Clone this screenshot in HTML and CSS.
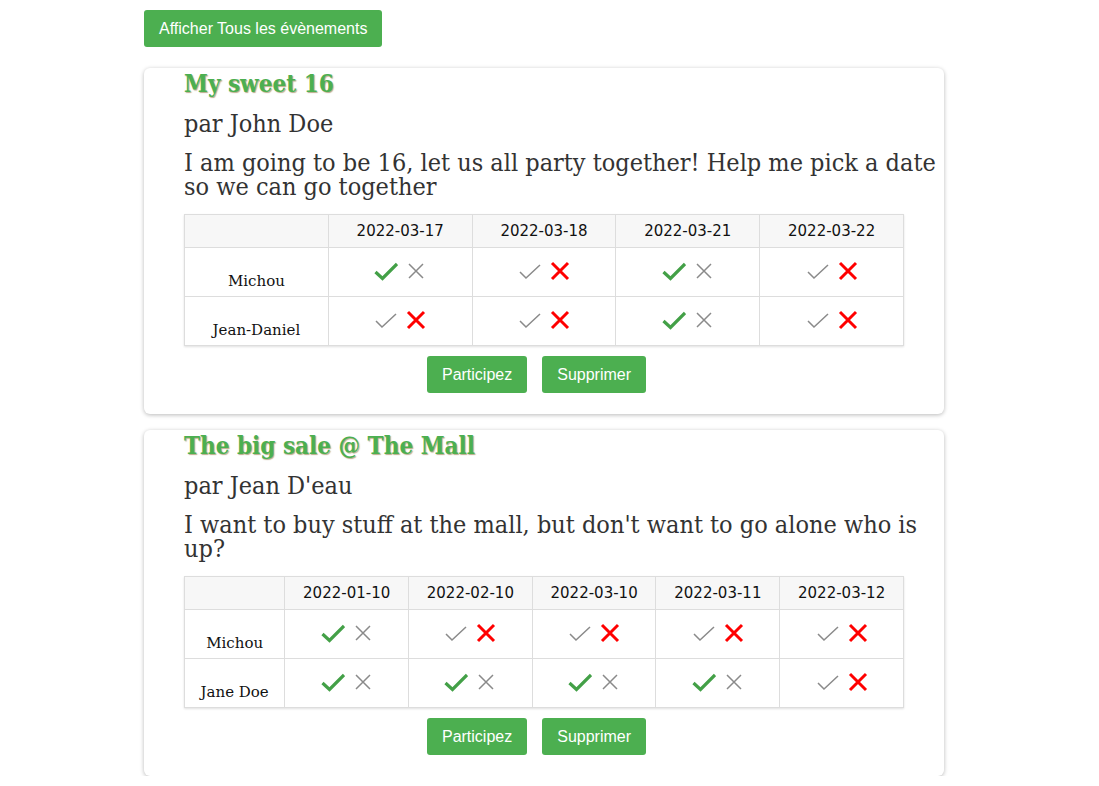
FILE: index.html
```html
<!DOCTYPE html>
<html lang="fr">
<head>
<meta charset="utf-8">
<title>Évènements</title>
<link rel="stylesheet" href="styles.css">
</head>
<body>
<svg width="0" height="0" class="defs">
  <defs>
    <symbol id="ok-on" viewBox="0 0 24 20"><path d="M1.5 11 L8.5 17.5 L23 3" fill="none" stroke="#43a047" stroke-width="3.2"/></symbol>
    <symbol id="ok-off" viewBox="0 0 24 20"><path d="M2 11 L8 17 L22 4" fill="none" stroke="#8a8a8a" stroke-width="1.5"/></symbol>
    <symbol id="no-on" viewBox="0 0 20 20"><path d="M2 2 L18 18 M18 2 L2 18" fill="none" stroke="#ff0000" stroke-width="3"/></symbol>
    <symbol id="no-off" viewBox="0 0 20 20"><path d="M3 3 L17 17 M17 3 L3 17" fill="none" stroke="#8a8a8a" stroke-width="1.5"/></symbol>
  </defs>
</svg>
<div class="page">
  <button class="btn">Afficher Tous les évènements</button>

  <section class="card">
    <h2 class="title">My sweet 16</h2>
    <p class="author">par John Doe</p>
    <p class="desc">I am going to be 16, let us all party together! Help me pick a date so we can go together</p>
    <table class="grid fixed">
      <thead>
        <tr><th></th><th>2022-03-17</th><th>2022-03-18</th><th>2022-03-21</th><th>2022-03-22</th></tr>
      </thead>
      <tbody>
        <tr>
          <td class="name">Michou</td>
          <td><span class="pair"><svg class="ic-ok"><use href="#ok-on"/></svg><svg class="ic-no"><use href="#no-off"/></svg></span></td>
          <td><span class="pair"><svg class="ic-ok"><use href="#ok-off"/></svg><svg class="ic-no"><use href="#no-on"/></svg></span></td>
          <td><span class="pair"><svg class="ic-ok"><use href="#ok-on"/></svg><svg class="ic-no"><use href="#no-off"/></svg></span></td>
          <td><span class="pair"><svg class="ic-ok"><use href="#ok-off"/></svg><svg class="ic-no"><use href="#no-on"/></svg></span></td>
        </tr>
        <tr>
          <td class="name">Jean-Daniel</td>
          <td><span class="pair"><svg class="ic-ok"><use href="#ok-off"/></svg><svg class="ic-no"><use href="#no-on"/></svg></span></td>
          <td><span class="pair"><svg class="ic-ok"><use href="#ok-off"/></svg><svg class="ic-no"><use href="#no-on"/></svg></span></td>
          <td><span class="pair"><svg class="ic-ok"><use href="#ok-on"/></svg><svg class="ic-no"><use href="#no-off"/></svg></span></td>
          <td><span class="pair"><svg class="ic-ok"><use href="#ok-off"/></svg><svg class="ic-no"><use href="#no-on"/></svg></span></td>
        </tr>
      </tbody>
    </table>
    <div class="actions">
      <button class="btn">Participez</button>
      <button class="btn">Supprimer</button>
    </div>
  </section>

  <section class="card">
    <h2 class="title">The big sale @ The Mall</h2>
    <p class="author">par Jean D'eau</p>
    <p class="desc">I want to buy stuff at the mall, but don't want to go alone who is up?</p>
    <table class="grid">
      <thead>
        <tr><th class="first"></th><th>2022-01-10</th><th>2022-02-10</th><th>2022-03-10</th><th>2022-03-11</th><th>2022-03-12</th></tr>
      </thead>
      <tbody>
        <tr>
          <td class="name">Michou</td>
          <td><span class="pair"><svg class="ic-ok"><use href="#ok-on"/></svg><svg class="ic-no"><use href="#no-off"/></svg></span></td>
          <td><span class="pair"><svg class="ic-ok"><use href="#ok-off"/></svg><svg class="ic-no"><use href="#no-on"/></svg></span></td>
          <td><span class="pair"><svg class="ic-ok"><use href="#ok-off"/></svg><svg class="ic-no"><use href="#no-on"/></svg></span></td>
          <td><span class="pair"><svg class="ic-ok"><use href="#ok-off"/></svg><svg class="ic-no"><use href="#no-on"/></svg></span></td>
          <td><span class="pair"><svg class="ic-ok"><use href="#ok-off"/></svg><svg class="ic-no"><use href="#no-on"/></svg></span></td>
        </tr>
        <tr>
          <td class="name">Jane Doe</td>
          <td><span class="pair"><svg class="ic-ok"><use href="#ok-on"/></svg><svg class="ic-no"><use href="#no-off"/></svg></span></td>
          <td><span class="pair"><svg class="ic-ok"><use href="#ok-on"/></svg><svg class="ic-no"><use href="#no-off"/></svg></span></td>
          <td><span class="pair"><svg class="ic-ok"><use href="#ok-on"/></svg><svg class="ic-no"><use href="#no-off"/></svg></span></td>
          <td><span class="pair"><svg class="ic-ok"><use href="#ok-on"/></svg><svg class="ic-no"><use href="#no-off"/></svg></span></td>
          <td><span class="pair"><svg class="ic-ok"><use href="#ok-off"/></svg><svg class="ic-no"><use href="#no-on"/></svg></span></td>
        </tr>
      </tbody>
    </table>
    <div class="actions">
      <button class="btn">Participez</button>
      <button class="btn">Supprimer</button>
    </div>
  </section>
</div>
</body>
</html>
```

FILE: styles.css
```css
html, body {
  margin: 0;
  padding: 0;
  background: #fff;
}
.defs {
  position: absolute;
  width: 0;
  height: 0;
  overflow: hidden;
}
.page {
  padding: 10px 0 0 144px;
  width: 800px;
  font-family: "DejaVu Serif", serif;
}
.btn {
  display: inline-block;
  height: 37px;
  padding: 0 15px;
  border: none;
  border-radius: 3px;
  background: #4caf50;
  color: #fff;
  font-family: "Liberation Sans", Arial, sans-serif;
  font-size: 16px;
  cursor: pointer;
}
.card {
  margin-top: 21px;
  padding: 0 0 21px 40px;
  border-radius: 6px;
  background: #fff;
  box-shadow: 0 1px 4px rgba(0, 0, 0, 0.28);
}
.card + .card {
  margin-top: 16px;
}
.title {
  margin: 0;
  line-height: 32px;
  font-size: 24px;
  font-weight: bold;
  font-stretch: condensed;
  color: #4caf50;
  text-shadow: 1px 1px 1px rgba(130, 100, 40, 0.55);
}
.author {
  margin: 8px 0 0;
  line-height: 32px;
  font-size: 25px;
  font-stretch: condensed;
  color: #333;
}
.desc {
  margin: 11px 0 0;
  line-height: 24px;
  font-size: 25px;
  font-stretch: condensed;
  color: #333;
}
.grid {
  margin-top: 15px;
  width: 720px;
  border-collapse: collapse;
  box-shadow: 0 1px 2px rgba(0, 0, 0, 0.12);
}
.grid.fixed {
  table-layout: fixed;
}
.grid th {
  height: 32px;
  padding: 0 6px;
  border: 1px solid #ddd;
  background: #f7f7f7;
  font-family: "DejaVu Sans", sans-serif;
  font-weight: normal;
  font-size: 15px;
  color: #111;
  text-align: center;
}
.grid td {
  height: 48px;
  padding: 0 6px;
  border: 1px solid #ddd;
  text-align: center;
  vertical-align: middle;
}
.grid td.name {
  height: 42px;
  vertical-align: bottom;
  padding-bottom: 6px;
  font-size: 15px;
  color: #111;
}
.pair {
  display: inline-flex;
  align-items: center;
  gap: 8px;
  margin-top: -4px;
  vertical-align: middle;
}
.ic-ok {
  width: 24px;
  height: 20px;
}
.ic-no {
  width: 20px;
  height: 20px;
}
.actions {
  display: flex;
  justify-content: center;
  margin-top: 10px;
  padding-right: 15px;
  width: 720px;
  box-sizing: border-box;
  gap: 15px;
}
```
